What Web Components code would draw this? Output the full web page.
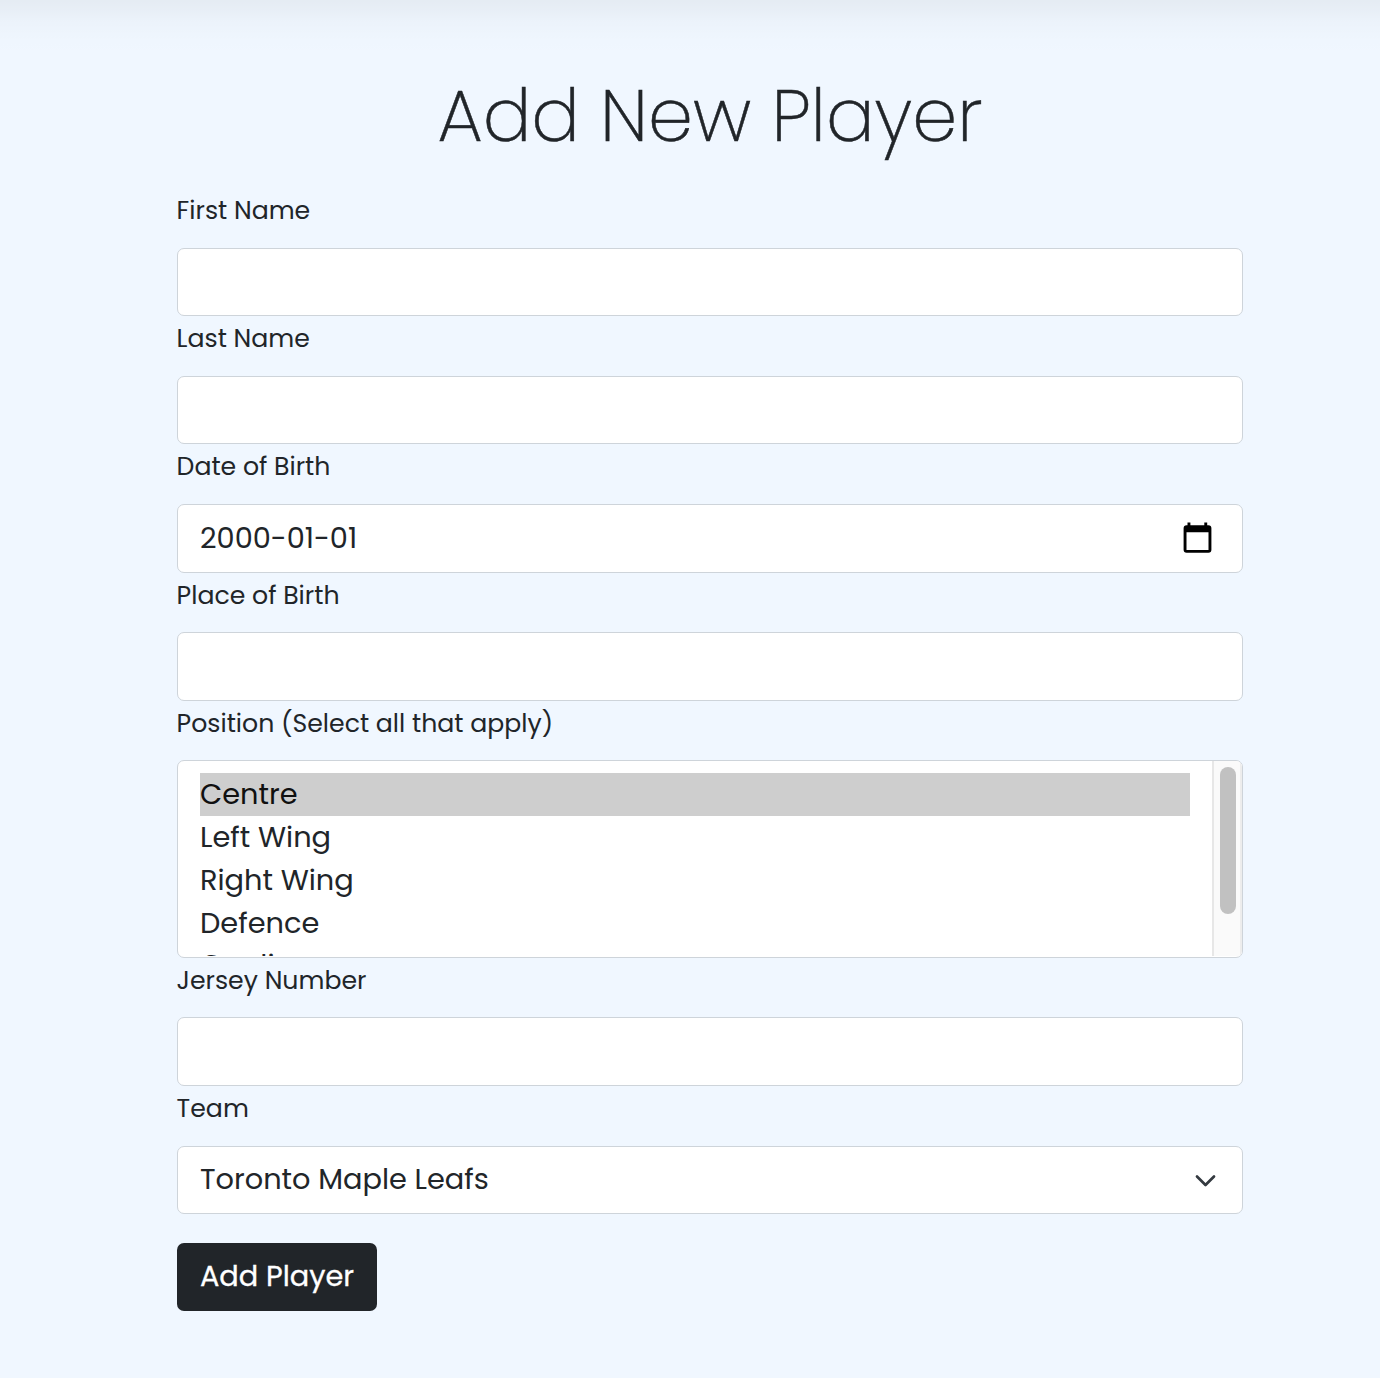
<!DOCTYPE html>
<html lang="en">
<head>
<meta charset="utf-8">
<title>Add New Player</title>
<style>
html,body{margin:0;background:#f0f7ff}
body{font-family:Poppins,Inter,"Open Sans",sans-serif;color:#212529}
</style>
</head>
<body>
<player-page>
  <span slot="title">Add New Player</span>
  <form-field><span slot="label">First Name</span><text-box></text-box></form-field>
  <form-field><span slot="label">Last Name</span><text-box></text-box></form-field>
  <form-field><span slot="label">Date of Birth</span><text-box icon="calendar" style="--h:69px;--lift:0px">2000-01-01</text-box></form-field>
  <form-field style="--label:59px"><span slot="label">Place of Birth</span><text-box style="--h:69px"></text-box></form-field>
  <form-field style="--label:59px"><span slot="label">Position (Select all that apply)</span>
    <option-list>
      <option-row selected>Centre</option-row>
      <option-row>Left Wing</option-row>
      <option-row>Right Wing</option-row>
      <option-row>Defence</option-row>
      <option-row style="line-height:41px">Goalie</option-row>
    </option-list>
  </form-field>
  <form-field style="--label:59px"><span slot="label">Jersey Number</span><text-box style="--h:69px"></text-box></form-field>
  <form-field><span slot="label">Team</span><text-box icon="chevron">Toronto Maple Leafs</text-box></form-field>
  <submit-button>Add Player</submit-button>
</player-page>
<script>
function define(name, html) {
  customElements.define(name, class extends HTMLElement {
    constructor() {
      super();
      this.attachShadow({mode: 'open'}).innerHTML = html;
    }
  });
}

define('player-page', `<style>
  :host{display:block;box-sizing:border-box;min-height:1378px;padding:73px 137px 0 177px;
    background:linear-gradient(rgba(0,0,0,.048),rgba(0,0,0,.034) 10px,rgba(0,0,0,.021) 20px,rgba(0,0,0,.011) 30px,rgba(0,0,0,.004) 42px,transparent 58px) no-repeat,#f0f7ff}
  h1{margin:0;height:115px;font-family:"Poppins ExtraLight",Poppins,Inter,sans-serif;font-size:72px;line-height:86px;font-weight:200;text-align:center;-webkit-text-stroke:.5px}
  form{display:flex;flex-direction:column;align-items:stretch}
</style><h1><slot name="title"></slot></h1><form><slot></slot></form>`);

define('form-field', `<style>
  :host{display:flex;flex-direction:column}
  label{display:block;height:var(--label,60px);font-size:25.2px;line-height:45px;text-indent:-.4px}
</style><label><slot name="label"></slot></label><slot></slot>`);

define('text-box', `<style>
  :host{display:flex;align-items:center;justify-content:space-between;box-sizing:border-box;height:var(--h,68px);
    padding:0 26px 0 22px;background:#fff;border:1px solid #ced4da;border-radius:7px;font-size:28.8px;line-height:43px}
  .value{padding-bottom:var(--lift,2px)}
  svg{display:none;flex:none}
  :host([icon=calendar]) .calendar,:host([icon=chevron]) .chevron{display:block}
  .calendar{margin:0 4px 2px 0}
  .chevron{margin-top:2px}
</style><div class="value"><slot></slot></div>
<svg class="calendar" width="29" height="32" viewBox="0 0 29 32"><path fill-rule="evenodd" d="M4.500 .5h2.900v2.700h13.900V.5h2.900v2.700h1.200a3 3 0 0 1 3 3v21.600a3 3 0 0 1-3 3H3.600a3 3 0 0 1-3-3V6.200a3 3 0 0 1 3-3h.9zM3.500 10.200v17.800h22V10.200z"/></svg>
<svg class="chevron" width="21" height="14" viewBox="0 0 21 14"><path d="M2 2.500l8.500 8.500L19 2.500" fill="none" stroke="#343a40" stroke-width="2.700" stroke-linecap="round" stroke-linejoin="round"/></svg>`);

define('option-list', `<style>
  :host{display:flex;box-sizing:border-box;height:198px;background:#fff;border:1px solid #ced4da;border-radius:7px;overflow:hidden;font-size:28.8px}
  .rows{flex:1;height:195px;overflow:hidden;padding:12px 22px 0;box-sizing:border-box}
  .bar{box-sizing:border-box;width:30px;height:195px;background:#fafafa;border-left:2px solid #e7e7e7;border-right:2px solid #ededed;padding:6px 4px 0 6px}
  .thumb{width:16px;height:147px;border-radius:8px;background:#c1c1c1}
</style><div class="rows"><slot></slot></div><div class="bar"><div class="thumb"></div></div>`);

define('option-row', `<style>
  :host{display:block;box-sizing:border-box;height:43px;line-height:43px}
  :host([selected]){background:#cecece;color:#101010}
</style><slot></slot>`);

define('submit-button', `<style>
  :host{display:flex;margin-top:29px}
  button{width:200px;height:68px;padding:0 0 1px;box-sizing:border-box;border:0;border-radius:7px;background:#212529;color:#fff;font:inherit;font-size:28.8px;line-height:43px;text-align:center;-webkit-text-stroke:.3px #fff}
</style><button type="button"><slot></slot></button>`);
</script>
</body>
</html>
